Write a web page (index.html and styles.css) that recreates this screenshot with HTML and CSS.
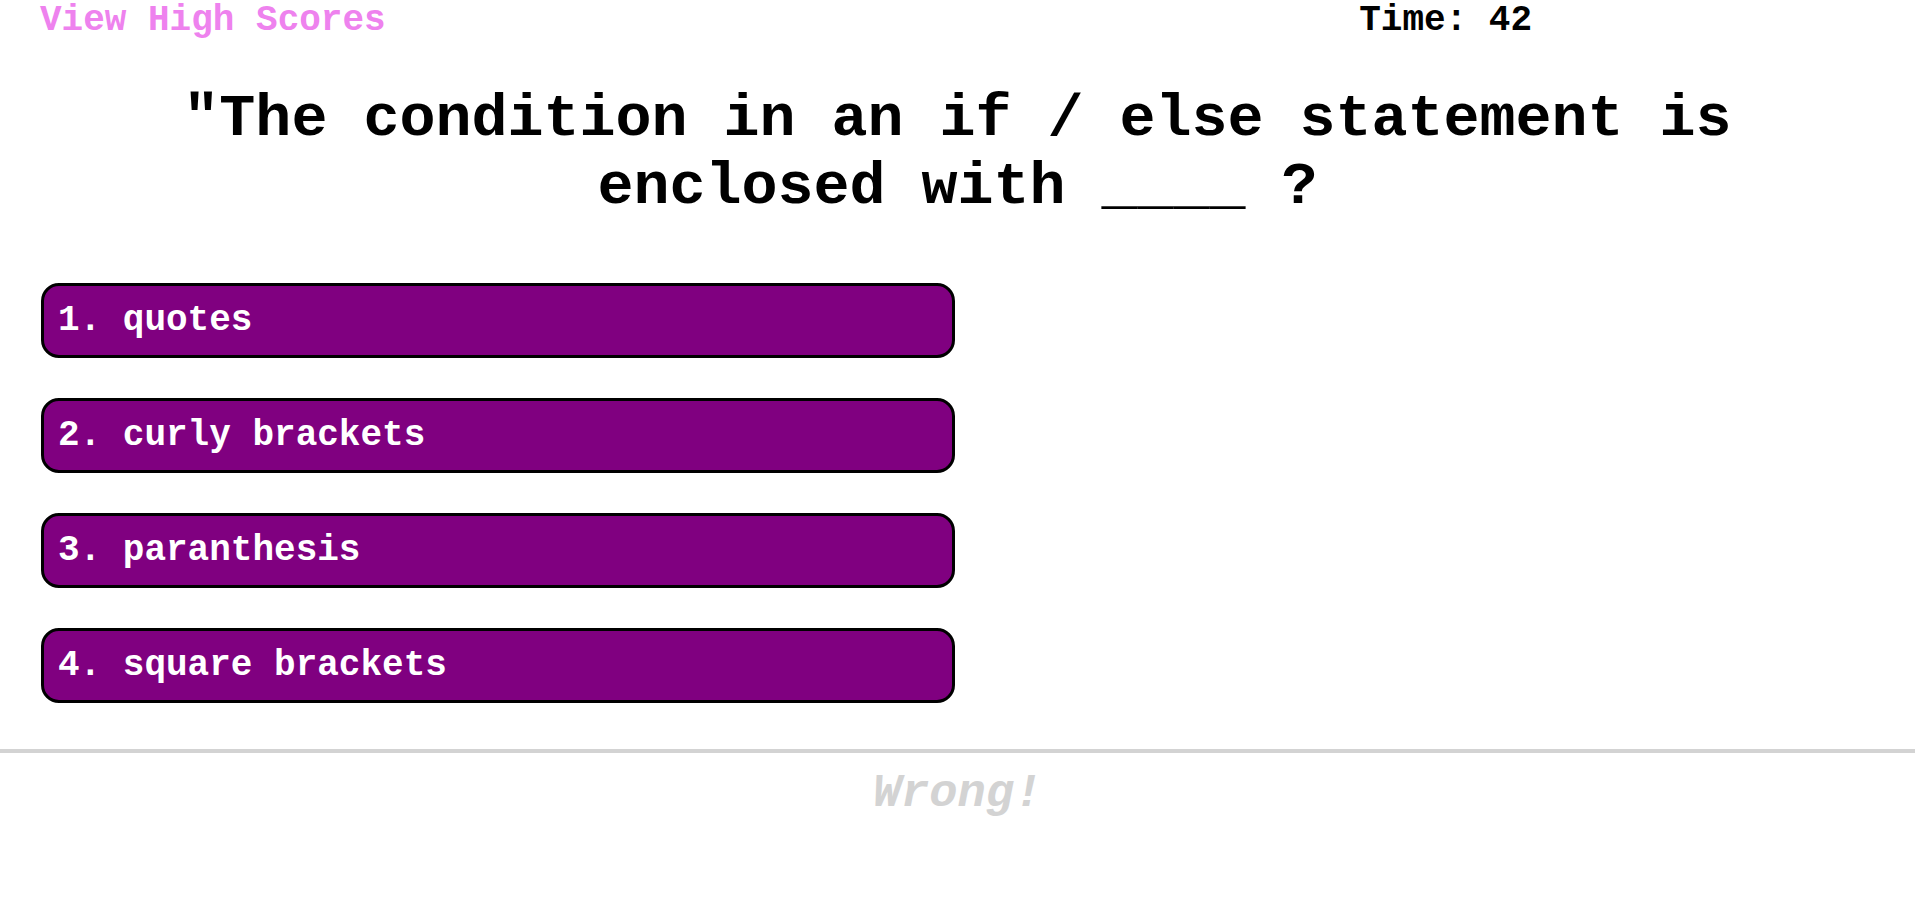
FILE: index.html
```html
<!DOCTYPE html>
<html lang="en">
<head>
  <meta charset="UTF-8" />
  <title>Code Quiz</title>
  <link rel="stylesheet" href="styles.css">
</head>
<body>

<header class="top-bar">
  <a href="#" class="scores-link">View High Scores</a>
  <span class="timer">Time: 42</span>
</header>

<main class="quiz">
  <h1 class="question">"The condition in an if / else statement is enclosed with ____ ?</h1>
  <div class="choices">
    <button class="choice">1. quotes</button>
    <button class="choice">2. curly brackets</button>
    <button class="choice">3. paranthesis</button>
    <button class="choice">4. square brackets</button>
  </div>
</main>

<div class="feedback">
  <p class="result">Wrong!</p>
</div>

</body>
</html>
```

FILE: styles.css
```css
:root {
  --purple: #800080;
  --pink: #ee82ee;
  --grey: #d3d3d3;
}

body {
  margin: 0;
  font-family: "Liberation Mono", "Courier New", monospace;
  font-weight: bold;
  background: white;
  color: black;
}

.top-bar {
  display: flex;
  justify-content: space-between;
  padding: 0 383px 0 40px;
  font-size: 36px;
}

.scores-link {
  color: var(--pink);
  text-decoration: none;
}

.question {
  margin: 44px 0 0;
  padding: 0 150px;
  font-size: 60px;
  text-align: center;
}

.choices {
  display: flex;
  flex-direction: column;
  gap: 40px;
  margin: 62px 0 0 41px;
}

.choice {
  width: 914px;
  padding: 14px 15px 14px 14px;
  background: var(--purple);
  color: white;
  font-family: inherit;
  font-weight: bold;
  font-size: 36px;
  line-height: 41px;
  text-align: left;
  border: 3px solid black;
  border-radius: 18px;
  cursor: pointer;
}

.feedback {
  margin-top: 46px;
  border-top: 4px solid var(--grey);
}

.result {
  margin: 14px 0 0;
  text-align: center;
  font-size: 47px;
  font-style: italic;
  color: var(--grey);
}
```
